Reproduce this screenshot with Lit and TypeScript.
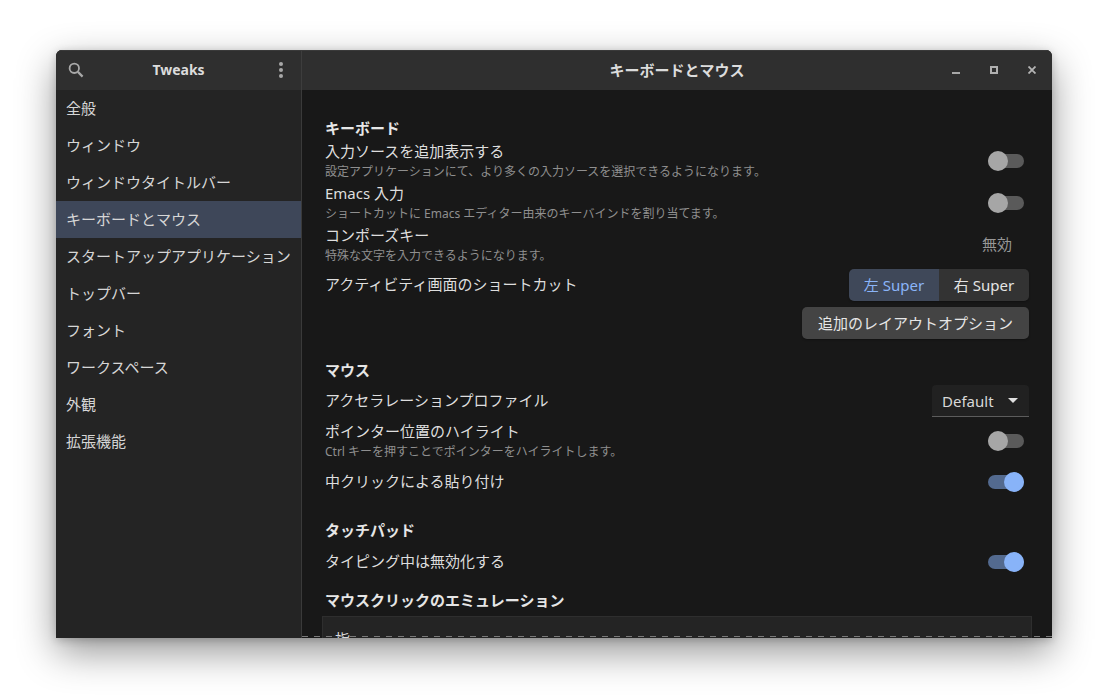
import { LitElement, html, css } from "lit";
import { customElement } from "lit/decorators.js";

const NAV = ["全般","ウィンドウ","ウィンドウタイトルバー","キーボードとマウス","スタートアップアプリケーション","トップバー","フォント","ワークスペース","外観","拡張機能"];

@customElement("app-root")
export class AppRoot extends LitElement {
  static styles = css`
    :host { display:block; width:1108px; height:700px; background:#fff; overflow:hidden;
      font-family:"Noto Sans","Noto Sans CJK JP",sans-serif; font-size:15px; color:#e2e2e2; }
    .page { padding:50px 56px 0; }
    .win { position:relative; width:996px; height:588px; border-radius:6px 6px 0 0; overflow:hidden;
      display:grid; grid-template-columns:246px 1fr; grid-template-rows:40px 1fr; background:#181818; }
    .shadow { border-radius:6px 6px 0 0; box-shadow:0 14px 38px rgba(0,0,0,.42),0 2px 8px rgba(0,0,0,.2); width:996px; }
    .hl { background:#2f2f2f; border-top:1px solid #3a3a3a; border-right:1px solid #3d3d3d; display:flex; align-items:center; justify-content:space-between; padding:0 18px 2px 12px; box-sizing:border-box; }
    .hr { background:#2f2f2f; border-top:1px solid #3a3a3a; display:flex; align-items:center; position:relative; justify-content:center; padding-bottom:2px; box-sizing:border-box; }
    .title { font-weight:700; color:#dcdcdc; line-height:20px; }
    .app { font-size:14px; margin-right:6px; }
    .wbtns { position:absolute; right:0; top:0; bottom:0; display:flex; align-items:center; gap:30px; padding:0 16px 1px 0; }
    svg { display:block; }
    .side { background:#242424; border-right:1px solid #3a3a3a; box-sizing:border-box; }
    .nav { height:37px; line-height:37px; padding-left:10px; color:#d6d6d6; white-space:nowrap; }
    .nav.sel { background:#3e4759; }
    .main { padding:28px 23px 0; overflow:hidden; display:block; }
    .h { font-weight:700; line-height:20px; color:#e6e6e6; white-space:nowrap; }
    .row { display:flex; justify-content:space-between; align-items:center; }
    .t { line-height:20px; color:#dedede; white-space:nowrap; }
    .s { font-size:12px; line-height:20px; margin-top:1px; color:#8f8f8f; white-space:nowrap; }
    .sw { position:relative; width:36px; height:14px; border-radius:7px; background:#5a5a5a; margin-right:5px; }
    .sw::after { content:""; position:absolute; left:0; top:-3px; width:20px; height:20px; border-radius:50%; background:#a6a6a6; }
    .sw.on { background:#536a8f; }
    .sw.on::after { left:16px; background:#88b3f8; }
    .r1 { height:42px; }
    .first { margin-top:2px; }
    .off { color:#979797; margin:0 17px 3px 0; }
    .seg { display:flex; height:32px; border-radius:5px; overflow:hidden; box-shadow:0 1px 2px rgba(0,0,0,.3); }
    .seg div { width:90px; line-height:32px; text-align:center; background:#333; color:#e4e4e4; }
    .seg .act { background:#3f4859; color:#8ab4f8; }
    .btn { height:32px; width:227px; line-height:32px; text-align:center; background:#444; border-radius:5px; color:#e6e6e6; box-shadow:0 1px 2px rgba(0,0,0,.3); white-space:nowrap; }
    .right { display:flex; justify-content:flex-end; }
    .combo { width:97px; height:32px; box-sizing:border-box; background:#212121; border-bottom:1px solid #5c5c5c; border-radius:4px 4px 0 0; display:flex; align-items:center; justify-content:space-between; padding:0 11px 0 10px; color:#d8d8d8; }
    .up { padding-bottom:2px; }
    .rs { margin-top:3px; }
    .rb { margin-top:6px; }
    .hm { margin-top:21px; }
    .rc { margin-top:5px; }
    .rp { margin-top:3px; }
    .rm { margin-top:9px; }
    .ht { margin-top:27px; }
    .rm2 { margin-top:11px; }
    .he { margin-top:17px; }
    .box { margin:6px -3px 0; height:60px; background:#242424; border:1px solid #2e2e2e; padding:8px 12px; box-sizing:border-box; line-height:28px; color:#d8d8d8; }
    .dash { position:absolute; left:246px; right:0; bottom:1px; height:1px; background:repeating-linear-gradient(90deg,#7a7a7a 0 6px,transparent 6px 12px); }
  `;

  render() {
    return html`<div class="page"><div class="shadow"><div class="win">
      <div class="hl">
        <svg width="16" height="16" viewBox="0 0 16 16" fill="none" stroke="#a8a8a8" stroke-width="1.8"><circle cx="6.3" cy="6.3" r="4.7"/><path d="M9.9 9.9 14.6 14.6" stroke-width="2.2"/></svg>
        <span class="title app">Tweaks</span>
        <svg width="4" height="16" viewBox="0 0 4 16" fill="#a8a8a8"><circle cx="2" cy="2" r="2"/><circle cx="2" cy="8" r="2"/><circle cx="2" cy="14" r="2"/></svg>
      </div>
      <div class="hr">
        <span class="title">キーボードとマウス</span>
        <div class="wbtns">
          <svg width="8" height="8" viewBox="0 0 8 8"><path d="M0 6h8v2H0z" fill="#a8a8a8"/></svg>
          <svg width="8" height="8" viewBox="0 0 8 8" fill="none" stroke="#b0b0b0" stroke-width="2"><rect x="1" y="1" width="6" height="6"/></svg>
          <svg width="8" height="8" viewBox="0 0 8 8" fill="none" stroke="#b4b4b4" stroke-width="1.8"><path d="M.5.5l7 7M7.5.5l-7 7"/></svg>
        </div>
      </div>
      <div class="side">${NAV.map((n,i)=>html`<div class="nav ${i===3?"sel":""}">${n}</div>`)}</div>
      <div class="main">
        <div class="h">キーボード</div>
        <div class="row r1 first"><div><div class="t">入力ソースを追加表示する</div><div class="s">設定アプリケーションにて、より多くの入力ソースを選択できるようになります。</div></div><div class="sw"></div></div>
        <div class="row r1"><div><div class="t">Emacs 入力</div><div class="s">ショートカットに Emacs エディター由来のキーバインドを割り当てます。</div></div><div class="sw"></div></div>
        <div class="row r1"><div><div class="t">コンポーズキー</div><div class="s">特殊な文字を入力できるようになります。</div></div><div class="off">無効</div></div>
        <div class="row rs"><div class="t up">アクティビティ画面のショートカット</div><div class="seg"><div class="act">左 Super</div><div>右 Super</div></div></div>
        <div class="right rb"><div class="btn">追加のレイアウトオプション</div></div>
        <div class="h hm">マウス</div>
        <div class="row rc"><div class="t up">アクセラレーションプロファイル</div><div class="combo"><span>Default</span><svg width="10" height="5" viewBox="0 0 10 5"><path d="M0 0h10L5 5z" fill="#e0e0e0"/></svg></div></div>
        <div class="row r1 rp"><div><div class="t">ポインター位置のハイライト</div><div class="s">Ctrl キーを押すことでポインターをハイライトします。</div></div><div class="sw"></div></div>
        <div class="row rm"><div class="t up">中クリックによる貼り付け</div><div class="sw on"></div></div>
        <div class="h ht">タッチパッド</div>
        <div class="row rm2"><div class="t up">タイピング中は無効化する</div><div class="sw on"></div></div>
        <div class="h he">マウスクリックのエミュレーション</div>
        <div class="box">指</div>
      </div>
      <div class="dash"></div>
    </div></div></div>`;
  }
}
